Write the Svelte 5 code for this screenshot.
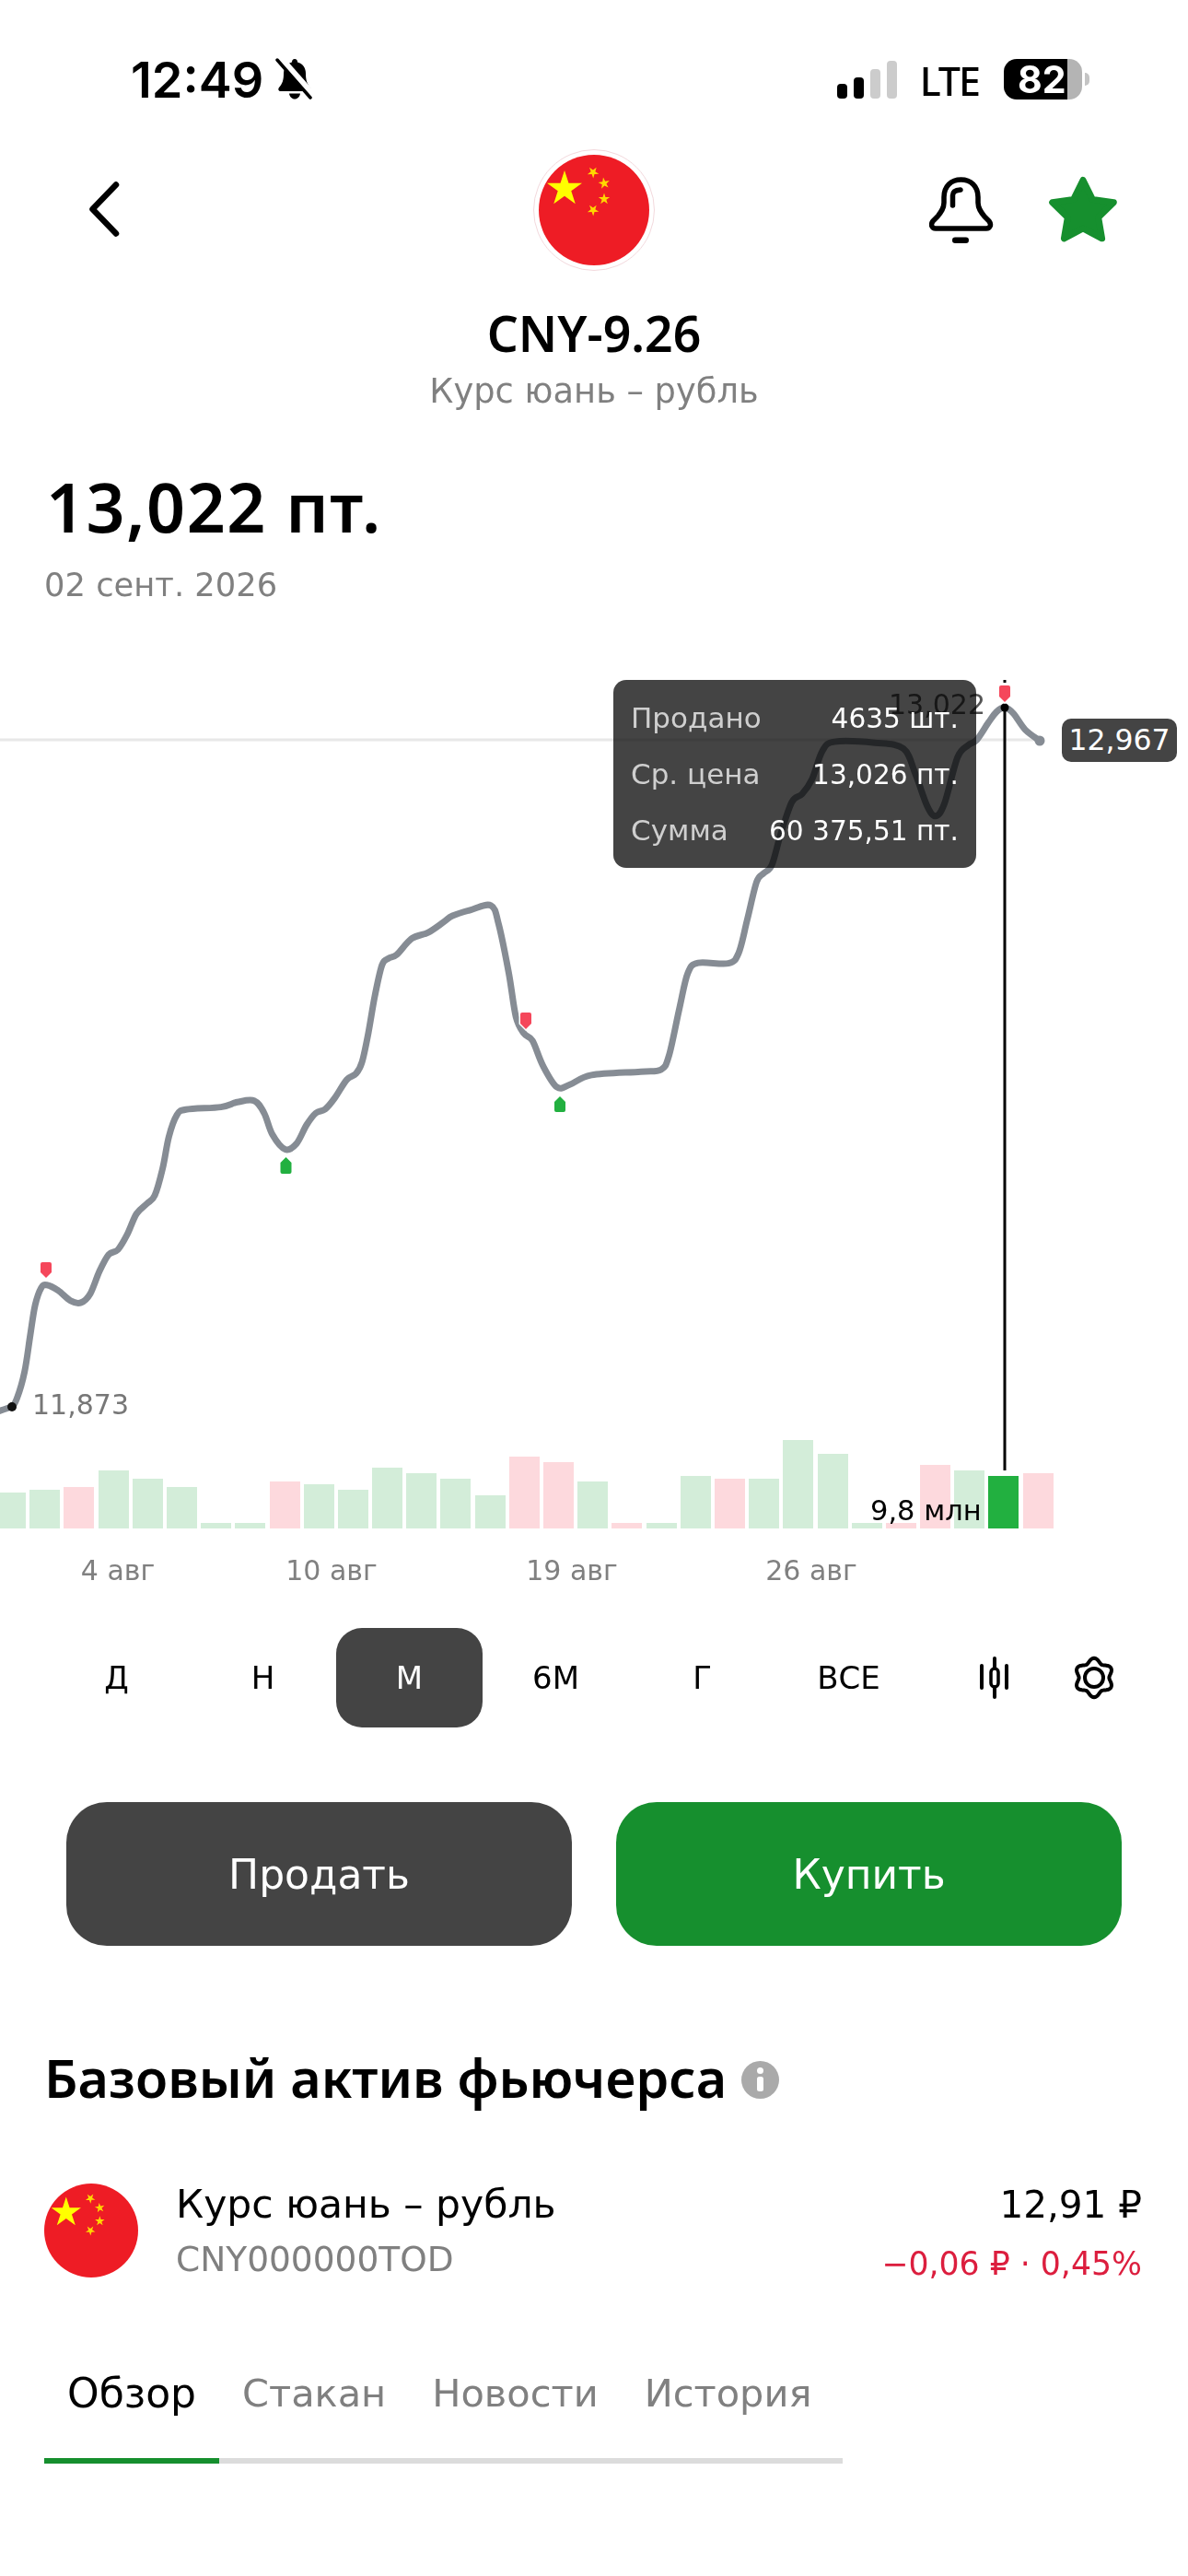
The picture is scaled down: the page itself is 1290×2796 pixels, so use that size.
<script>
  // chart points in page coordinates, read off the screenshot
  const pts = [
    [-6,1533],[13,1527],[18,1520],[27,1490],[33,1448],[38,1415],[45,1396],[50,1394],[63,1400],[77,1413],[88,1415],[98,1406],
    [108,1379],[118,1360],[128,1358],[138,1341],[148,1316],[160,1306],[168,1300],[177,1268],[183,1233],[192,1209],[198,1204],
    [243,1202],[257,1196],[277,1193],[287,1207],[295,1232],[310,1250],[322,1243],[333,1220],[343,1207],[353,1205],[363,1193],
    [377,1170],[387,1166],[393,1155],[400,1122],[407,1080],[415,1044],[422,1040],[430,1038],[447,1017],[465,1013],[483,1000],
    [490,994],[510,988],[535,980],[541,1000],[553,1057],[560,1107],[569,1123],[578,1127],[589,1157],[605,1183],[618,1178],
    [638,1166],[700,1163],[719,1162],[726,1150],[738,1093],[747,1053],[755,1044],[794,1047],[802,1037],[811,1000],[822,953],
    [829,948],[838,942],[847,907],[860,867],[871,863],[882,847],[893,813],[902,804],[952,806],[983,810],[994,840],[1007,877],
    [1016,888],[1025,877],[1040,817],[1052,808],[1060,805],[1074,783],[1082,772],[1091,767],[1100,773],[1113,793],[1129,804]
  ];

  // soften the hand-read corners a little before fitting the curve
  function soften(p) {
    return p.map((b, i) => {
      const a = p[i - 1], c = p[i + 1];
      if (!a || !c) return b;
      return [(a[0] + 8 * b[0] + c[0]) / 10, (a[1] + 8 * b[1] + c[1]) / 10];
    });
  }

  function smooth(p) {
    let d = `M${p[0][0]} ${p[0][1]}`;
    for (let i = 0; i < p.length - 1; i++) {
      const a = p[i - 1] || p[i], b = p[i], c = p[i + 1], e = p[i + 2] || c;
      const c1 = [b[0] + (c[0] - a[0]) / 6, b[1] + (c[1] - a[1]) / 6];
      const c2 = [c[0] - (e[0] - b[0]) / 6, c[1] - (e[1] - b[1]) / 6];
      d += `C${c1[0].toFixed(1)} ${c1[1].toFixed(1)} ${c2[0].toFixed(1)} ${c2[1].toFixed(1)} ${c[0].toFixed(1)} ${c[1].toFixed(1)}`;
    }
    return d;
  }
  const linePath = smooth(soften(pts));

  // [height, kind]
  const bars = [
    [39,'g'],[42,'g'],[45,'r'],[63,'g'],[54,'g'],[45,'g'],[6,'g'],[6,'g'],[51,'r'],[48,'g'],[42,'g'],[66,'g'],[60,'g'],[54,'g'],
    [36,'g'],[78,'r'],[72,'r'],[51,'g'],[6,'r'],[6,'g'],[57,'g'],[54,'r'],[54,'g'],[96,'g'],[81,'g'],[6,'g'],[6,'r'],[69,'r'],
    [63,'g'],[57,'on'],[60,'r']
  ];

  const axis = [['4 авг',128],['10 авг',360],['19 авг',621],['26 авг',881]];
  const ranges = ['Д','Н','М','6М','Г','ВСЕ'];
  const tabs = ['Обзор','Стакан','Новости','История'];
  const stats = [['Продано','4635 шт.'],['Ср. цена','13,026 пт.'],['Сумма','60 375,51 пт.']];

  function star(cx, cy, r, rot = 0, inner = 0.382) {
    const out = [];
    for (let i = 0; i < 10; i++) {
      const a = -Math.PI / 2 + rot + (i * Math.PI) / 5;
      const q = i % 2 ? r * inner : r;
      out.push(`${(cx + q * Math.cos(a)).toFixed(2)},${(cy + q * Math.sin(a)).toFixed(2)}`);
    }
    return out.join(' ');
  }

  // six soft lobes, one pointing straight up
  function gear(cx, cy) {
    let d = '';
    for (let i = 0; i < 120; i++) {
      const t = (i / 120) * Math.PI * 2;
      const r = 18.8 + 2.4 * Math.cos(6 * t);
      const x = cx + r * Math.sin(t), y = cy - r * Math.cos(t);
      d += `${i ? 'L' : 'M'}${x.toFixed(2)} ${y.toFixed(2)}`;
    }
    return d + 'Z';
  }
</script>

{#snippet flag(size)}
  <svg class="flag" width={size} height={size} viewBox="0 0 120 120" aria-hidden="true">
    <circle cx="60" cy="60" r="60" fill="#ee1c25" />
    <polygon points={star(28, 37, 20)} fill="#ffff00" />
    <polygon points={star(59, 19, 6.5, 0.6)} fill="#ffd800" />
    <polygon points={star(71, 31, 6.5, 1.1)} fill="#ffd800" />
    <polygon points={star(71, 48, 6.5, 0)} fill="#ffd800" />
    <polygon points={star(59, 60, 6.5, 0.6)} fill="#ffd800" />
  </svg>
{/snippet}

<div class="page">
  <div class="status">
    <div class="time-group">
      <span class="time">12:49</span>
      <svg width="44" height="46" viewBox="0 0 44 46" aria-hidden="true">
        <path d="M22 1c-2 0-3 1.400-3 3.500C13 6 10 11 10 17c0 7-1.500 11-5 15-1.500 2-.5 4 2 4h30c2.500 0 3.500-2 2-4-3.500-4-5-8-5-15 0-6-3-11-9-12.500C25 2.400 24 1 22 1z" fill="#000" />
        <path d="M16 38.500c.5 3.500 3 6 6 6s5.500-2.500 6-6z" fill="#000" />
        <path d="M5 -1l38 43" stroke="#fff" stroke-width="8" />
        <path d="M3 2l36 41" stroke="#000" stroke-width="3.500" stroke-linecap="round" />
      </svg>
    </div>
    <div class="sys">
      <div class="signal">
        <i class="s1"></i><i class="s2"></i><i class="s3"></i><i class="s4"></i>
      </div>
      <span class="lte">LTE</span>
      <div class="battery">
        <div class="cell"><span>82</span></div>
        <div class="nub"></div>
      </div>
    </div>
  </div>

  <div class="nav">
    <div class="nav-side">
      <svg class="back" width="40" height="60" viewBox="0 0 40 60" aria-hidden="true">
        <path d="M33 3.500 7.500 30 33 56.500" fill="none" stroke="#000" stroke-width="6.500" stroke-linecap="round" stroke-linejoin="round" />
      </svg>
    </div>
    <div class="nav-flag">{@render flag(120)}</div>
    <div class="nav-side right">
      <svg width="70" height="76" viewBox="0 0 70 76" aria-hidden="true">
        <path d="M16 24C16 12 24 5 34.500 5S53 12 53 24v6c0 6 3 10 7 15l5 5c3 4 1 8-3 8H7c-4 0-6-4-3-8l5-5c4-5 7-9 7-15z" fill="none" stroke="#000" stroke-width="5.500" stroke-linejoin="round" />
        <path d="M25.500 33V22c0-3 2-5.500 8.500-6" fill="none" stroke="#000" stroke-width="5.500" stroke-linecap="round" />
        <rect x="25" y="67.500" width="18" height="6.500" rx="3.200" fill="#000" />
      </svg>
      <svg width="74" height="74" viewBox="0 0 74 74" aria-hidden="true">
        <polygon points={star(37, 39.500, 35, 0, 0.5)} fill="#168f2e" stroke="#168f2e" stroke-width="7" stroke-linejoin="round" />
      </svg>
    </div>
  </div>

  <div class="head">
    <div class="ticker">CNY-9.26</div>
    <div class="sub">Курс юань – рубль</div>
  </div>

  <div class="price">
    <div class="value">13,022 пт.</div>
    <div class="date">02 сент. 2026</div>
  </div>

  <div class="chart">
    <svg class="plot" width="1290" height="1030" viewBox="0 700 1290 1030" aria-hidden="true">
      <line x1="0" y1="803" x2="1130" y2="803" stroke="#e8e8e8" stroke-width="3" />
      <path d={linePath} fill="none" stroke="#868c94" stroke-width="7" stroke-linejoin="round" />
      <circle cx="1129" cy="804" r="5.500" fill="#868c94" />
      <circle cx="13" cy="1527" r="5" fill="#111" />
      <line x1="1091" y1="768" x2="1091" y2="1596" stroke="#000" stroke-width="3" />
      <line x1="1091" y1="738" x2="1091" y2="741" stroke="#000" stroke-width="3" />
      <circle cx="1091" cy="768" r="4.500" fill="#000" />
      <path d="M46 1370h8a2 2 0 0 1 2 2v9l-6 6-6-6v-9a2 2 0 0 1 2-2z" fill="#f5475b" />
      <path d="M567 1099h8a2 2 0 0 1 2 2v10l-6 6-6-6v-10a2 2 0 0 1 2-2z" fill="#f5475b" stroke="#fff" stroke-width="3" paint-order="stroke" />
      <path d="M1087 744h8a2 2 0 0 1 2 2v10l-6 6-6-6v-10a2 2 0 0 1 2-2z" fill="#f5475b" stroke="#fff" stroke-width="3" paint-order="stroke" />
      <path d="M310.500 1256l6 6v10a2 2 0 0 1-2 2h-8a2 2 0 0 1-2-2v-10z" fill="#22b040" />
      <path d="M608 1190l6 6v9a2 2 0 0 1-2 2h-8a2 2 0 0 1-2-2v-9z" fill="#22b040" />
    </svg>

    <span class="last-ghost">13,022</span>
    <div class="tip">
      {#each stats as [k, v]}
        <div class="tip-row"><span class="k">{k}</span><span class="v">{v}</span></div>
      {/each}
    </div>
    <span class="last-tag">12,967</span>
    <span class="low">11,873</span>

    <div class="bars">
      {#each bars as [h, kind]}
        <div class={`bar ${kind}`} style={`height:${h}px`}></div>
      {/each}
    </div>
    <span class="vol">9,8 млн</span>

    <div class="axis">
      {#each axis as [label, x]}
        <span style={`left:${x}px`}>{label}</span>
      {/each}
    </div>
  </div>

  <div class="ranges">
    {#each ranges as r}
      <div class="range" class:active={r === 'М'}>{r}</div>
    {/each}
    <div class="range-icons">
      <svg width="36" height="46" viewBox="0 0 36 46" aria-hidden="true">
        <path d="M4 10v24M31 10v24" stroke="#000" stroke-width="4" stroke-linecap="round" fill="none" />
        <path d="M18 2v10M18 33v11" stroke="#000" stroke-width="4" stroke-linecap="round" />
        <rect x="14" y="13" width="8" height="20" rx="4" fill="none" stroke="#000" stroke-width="3.500" />
      </svg>
      <svg width="50" height="50" viewBox="0 0 50 50" aria-hidden="true">
        <path d={gear(25, 25)} fill="none" stroke="#000" stroke-width="4" stroke-linejoin="round" />
        <circle cx="25" cy="25" r="10" fill="none" stroke="#000" stroke-width="4" />
      </svg>
    </div>
  </div>

  <div class="actions">
    <div class="btn sell">Продать</div>
    <div class="btn buy">Купить</div>
  </div>

  <div class="section-title">
    <h2>Базовый актив фьючерса</h2>
    <svg width="41" height="41" viewBox="0 0 41 41" aria-hidden="true">
      <circle cx="20.500" cy="20.500" r="20.500" fill="#aaa" />
      <circle cx="20.500" cy="10.500" r="3.500" fill="#fff" />
      <rect x="17" y="17" width="7" height="16" rx="2.500" fill="#fff" />
    </svg>
  </div>

  <div class="asset">
    {@render flag(102)}
    <div class="asset-text">
      <div class="asset-name">Курс юань – рубль</div>
      <div class="asset-code">CNY000000TOD</div>
    </div>
    <div class="asset-price">
      <div class="now">12,91 ₽</div>
      <div class="delta">−0,06 ₽ · 0,45%</div>
    </div>
  </div>

  <div class="tabs">
    {#each tabs as t, i}
      <div class="tab" class:current={i === 0}>{t}</div>
    {/each}
  </div>
</div>

<style>
  :global(body) {
    margin: 0;
    background: #fff;
  }

  .page {
    width: 1290px;
    height: 2796px;
    overflow: hidden;
    background: #fff;
    color: #000;
    font-family: "DejaVu Sans", "Noto Sans", sans-serif;
  }

  .flag {
    display: block;
    flex: none;
  }

  .status {
    height: 160px;
    box-sizing: border-box;
    padding: 60px 107px 0 142px;
    display: flex;
    justify-content: space-between;
    align-items: flex-start;
    font-family: Inter, "Noto Sans", sans-serif;
  }

  .time-group {
    display: flex;
    align-items: center;
    gap: 12px;
    height: 52px;
  }

  .time {
    font-size: 54px;
    line-height: 52px;
    font-weight: 600;
    padding-top: 2px;
  }

  .sys {
    display: flex;
    align-items: center;
    height: 52px;
  }

  .signal {
    display: flex;
    align-items: flex-end;
    gap: 7px;
    height: 42px;
  }

  .signal i {
    display: block;
    width: 11px;
    border-radius: 4px;
    background: #000;
  }

  .s1 { height: 16px; }
  .s2 { height: 23px; }
  .signal .s3 { height: 32px; background: #ccc; }
  .signal .s4 { height: 41px; background: #ccc; }

  .lte {
    margin-left: 25px;
    font-family: "Noto Sans", sans-serif;
    font-size: 43px;
    line-height: 52px;
    font-weight: 500;
    letter-spacing: -2px;
    padding-top: 4px;
  }

  .battery {
    margin-left: 27px;
    display: flex;
    align-items: center;
    gap: 3px;
  }

  .cell {
    width: 85px;
    height: 44px;
    border-radius: 14px;
    background: linear-gradient(90deg, #000 81.500%, #b4b4b4 81.500%);
    color: #fff;
    font-size: 41px;
    line-height: 44px;
    font-weight: 700;
    padding-left: 15px;
    box-sizing: border-box;
  }

  .nub {
    width: 5px;
    height: 14px;
    border-radius: 0 5px 5px 0;
    background: #c4c4c4;
  }

  .nav {
    height: 136px;
    display: grid;
    grid-template-columns: 1fr 132px 1fr;
    align-items: center;
  }

  .nav-side {
    display: flex;
    align-items: center;
    padding-left: 93px;
  }

  .nav-side.right {
    justify-content: flex-end;
    padding: 0 77px 0 0;
    gap: 60px;
  }

  .back {
    display: block;
    margin-top: -2px;
  }

  .nav-flag {
    width: 130px;
    height: 130px;
    border: 1px solid #f3d9dd;
    border-radius: 50%;
    display: flex;
    align-items: center;
    justify-content: center;
  }

  .head {
    margin-top: 36px;
    text-align: center;
  }

  .ticker {
    font-family: "Noto Sans", sans-serif;
    font-size: 53.500px;
    line-height: 60px;
    font-weight: 600;
  }

  .sub {
    margin-top: 8px;
    font-size: 36.800px;
    line-height: 50px;
    color: #808080;
  }

  .price {
    margin-top: 55px;
    padding-left: 50px;
  }

  .value {
    font-family: "Noto Sans", sans-serif;
    font-size: 73.500px;
    line-height: 90px;
    font-weight: 600;
    letter-spacing: 1.500px;
  }

  .date {
    margin-top: 15px;
    margin-left: -2px;
    font-size: 35.300px;
    line-height: 50px;
    color: #808080;
  }

  .chart {
    position: relative;
    height: 1030px;
    margin-top: 40px;
  }

  .plot {
    position: absolute;
    left: 0;
    top: 0;
  }

  .last-ghost {
    position: absolute;
    left: 965px;
    top: 44px;
    font-size: 30px;
    line-height: 42px;
    color: #555;
  }

  .tip {
    position: absolute;
    left: 666px;
    top: 38px;
    width: 394px;
    height: 204px;
    box-sizing: border-box;
    padding: 11px 19px 0 19px;
    color: #fff;
    line-height: 60px;
  }

  .tip::before {
    content: "";
    position: absolute;
    inset: 0;
    border-radius: 14px;
    background: #444;
    mix-blend-mode: multiply;
  }

  .tip-row {
    position: relative;
    display: flex;
    justify-content: space-between;
    align-items: baseline;
  }

  .k {
    color: #cfcfcf;
    font-size: 31px;
  }

  .v {
    font-size: 29.600px;
  }

  .last-tag {
    position: absolute;
    left: 1153px;
    top: 80px;
    width: 125px;
    height: 47px;
    border-radius: 10px;
    background: #444;
    color: #fff;
    font-size: 31.500px;
    line-height: 47px;
    text-align: center;
  }

  .low {
    position: absolute;
    left: 35px;
    top: 804px;
    font-size: 30px;
    line-height: 42px;
    color: #777;
  }

  .bars {
    position: absolute;
    left: -5px;
    bottom: 71px;
    display: flex;
    align-items: flex-end;
    gap: 4.200px;
  }

  .bar {
    width: 33px;
  }

  .bar.g { background: #d3edd9; }
  .bar.r { background: #fdd9dd; }
  .bar.on { background: #22b040; }

  .vol {
    position: absolute;
    left: 945px;
    top: 920px;
    font-size: 30.500px;
    line-height: 40px;
    color: #000;
  }

  .axis span {
    position: absolute;
    top: 985px;
    transform: translateX(-50%);
    font-size: 30px;
    line-height: 40px;
    color: #808080;
    white-space: nowrap;
  }

  .ranges {
    margin-top: 37px;
    padding-left: 47px;
    display: flex;
    align-items: center;
    height: 108px;
  }

  .range {
    width: 159px;
    height: 108px;
    border-radius: 28px;
    display: flex;
    align-items: center;
    justify-content: center;
    font-size: 34px;
  }

  .range.active {
    background: #444;
    color: #fff;
  }

  .range-icons {
    display: flex;
    align-items: center;
    gap: 65px;
    margin-left: 61px;
  }

  .range-icons svg {
    display: block;
  }

  .actions {
    margin-top: 81px;
    padding: 0 72px;
    display: flex;
    justify-content: space-between;
  }

  .btn {
    width: 549px;
    height: 156px;
    border-radius: 44px;
    display: flex;
    align-items: center;
    justify-content: center;
    color: #fff;
    font-size: 44px;
  }

  .sell { background: #444; }
  .buy { background: #168f2e; }

  .section-title {
    margin-top: 110px;
    padding-left: 48px;
    display: flex;
    align-items: center;
    gap: 16px;
    height: 70px;
  }

  h2 {
    margin: -4px 0 0;
    font-family: "Noto Sans", sans-serif;
    font-size: 57.500px;
    line-height: 70px;
    font-weight: 600;
  }

  .asset {
    margin-top: 78px;
    padding: 0 50px 0 48px;
    display: flex;
    align-items: flex-start;
    height: 102px;
  }

  .asset-text {
    margin-left: 41px;
    flex: 1;
  }

  .asset-name {
    font-size: 42.500px;
    line-height: 50px;
    margin-top: -2px;
  }

  .asset-code {
    margin-top: 9px;
    font-size: 37.500px;
    line-height: 50px;
    color: #808080;
  }

  .asset-price {
    text-align: right;
  }

  .now {
    font-size: 40.500px;
    line-height: 50px;
    margin-top: -2px;
  }

  .delta {
    margin-top: 14px;
    font-size: 34.700px;
    line-height: 50px;
    color: #dc1e3e;
  }

  .tabs {
    margin: 96px 0 0 48px;
    width: 867px;
    display: flex;
    border-bottom: 6px solid #dcdcdc;
  }

  .tab {
    padding: 0 25px 40px;
    font-size: 41.500px;
    line-height: 60px;
    color: #808080;
    margin-bottom: -6px;
    border-bottom: 6px solid transparent;
  }

  .tab.current {
    color: #000;
    font-size: 44px;
    border-bottom-color: #168f2e;
  }
</style>
